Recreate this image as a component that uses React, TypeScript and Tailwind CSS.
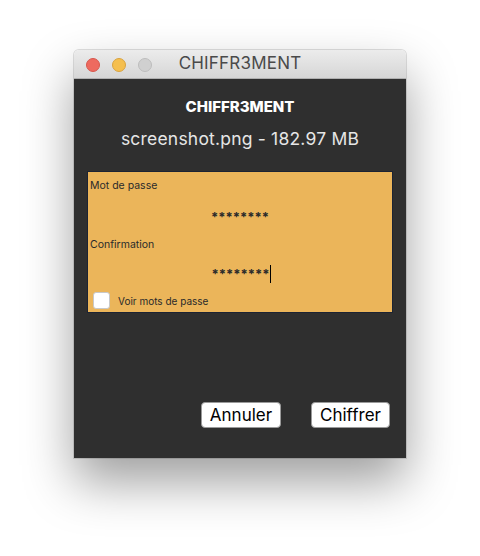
export default function App() {
  return (
    <div className="w-[480px] h-[556px] bg-white flex justify-center pt-[50px] font-['Inter','Liberation_Sans',sans-serif]">
      <div className="w-[332px] h-[408px] flex flex-col rounded-t-[5px] overflow-hidden shadow-[0_24px_50px_rgba(0,0,0,0.38),0_0_0_1px_rgba(0,0,0,0.12)]">
        <div className="h-[29px] shrink-0 bg-gradient-to-b from-[#ececec] to-[#d6d6d6] border-b border-[#b0b0b0] relative flex items-center justify-center">
          <div className="absolute left-[12px] top-[8px] flex gap-[12px]">
            <span className="w-[14px] h-[14px] rounded-full bg-[#ee6a5f] border border-[#d8574d]" />
            <span className="w-[14px] h-[14px] rounded-full bg-[#f5bf4f] border border-[#d9a33f]" />
            <span className="w-[14px] h-[14px] rounded-full bg-[#d0d0d0] border border-[#bdbdbd]" />
          </div>
          <span className="text-[17px] text-[#4a4a4a] tracking-[0.2px]">CHIFFR3MENT</span>
        </div>
        <div className="flex-1 bg-[#2f2f2f] flex flex-col px-[13px]">
          <div className="text-center text-white font-extrabold text-[15px] mt-[19px] leading-[18px]">CHIFFR3MENT</div>
          <div className="text-center text-[#e6e6e6] text-[17.5px] mt-[12px] leading-[22px] tracking-[0.2px]">screenshot.png - 182.97 MB</div>
          <div className="mt-[21px] h-[142px] bg-[#ebb55a] border border-[#1c2333] flex flex-col px-[2px] text-[#2a2a2a]">
            <div className="text-[10.5px] mt-[8px] leading-[12px]">Mot de passe</div>
            <div className="text-center text-[13px] font-bold mt-[18px] leading-[14px]">********</div>
            <div className="text-[10.5px] mt-[15px] leading-[12px]">Confirmation</div>
            <div className="flex justify-center mt-[16px]">
              <span className="text-[13px] font-bold leading-[14px] pl-[2px]">********</span>
              <span className="w-[1px] h-[18px] bg-black -mt-[2px]" />
            </div>
            <div className="flex items-center gap-[8px] mt-[9px] ml-[3px]">
              <span className="w-[17px] h-[17px] bg-white rounded-[3px] border border-[#c8c8c8]" />
              <span className="text-[10px] leading-[12px]">Voir mots de passe</span>
            </div>
          </div>
          <div className="flex justify-end gap-[30px] mt-[89px] pr-[3px]">
            <button className="w-[80px] h-[26px] bg-white rounded-[4px] border border-[#9a9a9a] text-[17px] text-black leading-none">Annuler</button>
            <button className="w-[79px] h-[26px] bg-white rounded-[4px] border border-[#9a9a9a] text-[17px] text-black leading-none">Chiffrer</button>
          </div>
        </div>
      </div>
    </div>
  );
}
